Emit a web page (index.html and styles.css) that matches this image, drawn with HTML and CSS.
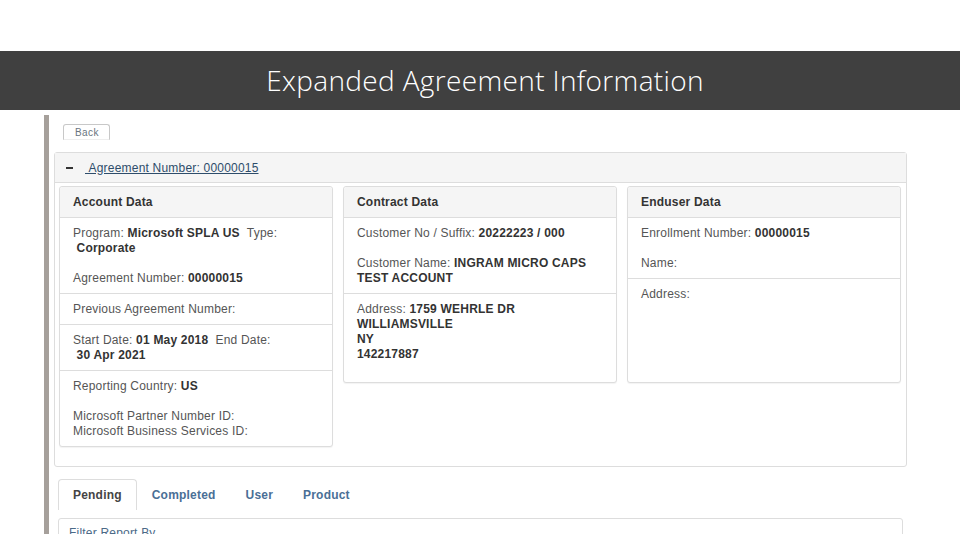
FILE: index.html
```html
<!DOCTYPE html>
<html lang="en">
<head>
  <meta charset="UTF-8">
  <meta name="viewport" content="width=device-width, initial-scale=1.0">
  <title>Expanded Agreement Information</title>
  <link rel="stylesheet" href="styles.css">
</head>
<body>
  <!-- Slide Title -->
  <header class="title-bar">
    <h1>Expanded Agreement Information</h1>
  </header>

  <!-- Screen Capture -->
  <main class="capture">
    <button class="back-btn">Back</button>

    <section class="agreement">
      <div class="agreement-head">
        <span class="collapse-icon"></span>
        <a href="#" class="agreement-link">&nbsp;Agreement Number: 00000015</a>
      </div>

      <div class="agreement-body">
        <!-- Account Data -->
        <div class="card">
          <div class="card-head">Account Data</div>
          <div class="card-row">
            <p>Program: <b>Microsoft SPLA US</b> &nbsp;Type:<br>&nbsp;<b>Corporate</b></p>
            <p>Agreement Number: <b>00000015</b></p>
          </div>
          <div class="card-row">
            <p>Previous Agreement Number:</p>
          </div>
          <div class="card-row">
            <p>Start Date: <b>01 May 2018</b> &nbsp;End Date:<br>&nbsp;<b>30 Apr 2021</b></p>
          </div>
          <div class="card-row">
            <p>Reporting Country: <b>US</b></p>
            <p>Microsoft Partner Number ID:<br>Microsoft Business Services ID:</p>
          </div>
        </div>

        <!-- Contract Data -->
        <div class="card">
          <div class="card-head">Contract Data</div>
          <div class="card-row">
            <p>Customer No / Suffix: <b>20222223 / 000</b></p>
            <p>Customer Name: <b>INGRAM MICRO CAPS</b><br><b>TEST ACCOUNT</b></p>
          </div>
          <div class="card-row tall">
            <p>Address: <b>1759 WEHRLE DR<br>WILLIAMSVILLE<br>NY<br>142217887</b></p>
          </div>
        </div>

        <!-- Enduser Data -->
        <div class="card">
          <div class="card-head">Enduser Data</div>
          <div class="card-row">
            <p>Enrollment Number: <b>00000015</b></p>
            <p>Name:</p>
          </div>
          <div class="card-row address-empty">
            <p>Address:</p>
          </div>
        </div>
      </div>
    </section>

    <!-- Report Tabs -->
    <nav class="tabs">
      <a href="#" class="tab active">Pending</a>
      <a href="#" class="tab">Completed</a>
      <a href="#" class="tab">User</a>
      <a href="#" class="tab">Product</a>
    </nav>

    <div class="filter-box">
      <p>Filter Report By</p>
    </div>
  </main>
</body>
</html>
```

FILE: styles.css
```css
/* General Styles */
body {
  margin: 0;
  padding: 51px 0 0;
  background: #fff;
  font-family: 'Liberation Sans', Arial, sans-serif;
  color: #555;
}

p {
  margin: 0;
}

/* Title Bar */
.title-bar {
  height: 59px;
  background: #404040;
  display: flex;
  align-items: center;
  justify-content: center;
}

.title-bar h1 {
  margin: 0 0 2px 10px;
  font-family: 'Open Sans', sans-serif;
  font-weight: 300;
  font-size: 28px;
  color: #fff;
  letter-spacing: 0.35px;
}

/* Capture Area */
.capture {
  margin: 5px 0 0 44px;
  height: 419px;
  padding-left: 5px;
  border-left: 5px solid #a6a09b;
  overflow: hidden;
  font-size: 12px;
  letter-spacing: 0.2px;
}

.back-btn {
  display: block;
  margin: 9px 0 0 9px;
  height: 16px;
  padding: 0 10px 0 11px;
  background: #fff;
  border: 1px solid #c8c8c8;
  border-bottom-color: #eee;
  border-radius: 3px 3px 0 0;
  font-family: 'Liberation Sans', Arial, sans-serif;
  font-size: 10px;
  letter-spacing: 0.4px;
  color: #6a7580;
}

/* Agreement Panel */
.agreement {
  margin-top: 12px;
  width: 851px;
  border: 1px solid #ddd;
  border-radius: 3px;
}

.agreement-head {
  height: 29px;
  background: #f5f5f5;
  border-bottom: 1px solid #ddd;
  display: flex;
  align-items: center;
  padding-left: 11px;
  gap: 13px;
}

.collapse-icon {
  width: 7px;
  height: 2px;
  background: #333;
}

.agreement-link {
  color: #2e4d6b;
  text-decoration: underline;
  margin-left: -1px;
}

.agreement-body {
  display: grid;
  grid-template-columns: 274px 274px 274px;
  gap: 10px;
  align-items: start;
  padding: 3px 0 19px 4px;
}

/* Data Cards */
.card {
  border: 1px solid #ddd;
  border-radius: 3px;
  box-shadow: 0 1px 1px rgba(0, 0, 0, 0.05);
  background: #fff;
}

.card-head {
  height: 30px;
  line-height: 30px;
  padding: 0 13px;
  background: #f5f5f5;
  border-bottom: 1px solid #ddd;
  border-radius: 3px 3px 0 0;
  font-weight: bold;
  color: #333;
}

.card-row {
  padding: 8px 13px 7px;
  line-height: 15px;
  border-top: 1px solid #ddd;
}

.card-head + .card-row {
  border-top: none;
}

.card-row p + p {
  margin-top: 15px;
}

.card-row b {
  color: #333;
}

.card-row.tall {
  padding-bottom: 20px;
}

.address-empty {
  min-height: 88px;
}

/* Tabs */
.tabs {
  display: flex;
  margin: 12px 0 0 4px;
}

.tab {
  height: 30px;
  line-height: 30px;
  padding: 0 14px;
  border: 1px solid transparent;
  border-bottom: none;
  border-radius: 4px 4px 0 0;
  font-weight: bold;
  color: #4a6f96;
  text-decoration: none;
}

.tab.active {
  border-color: #ddd;
  color: #444;
}

.filter-box {
  margin: 8px 0 0 4px;
  width: 823px;
  height: 60px;
  padding: 7px 10px;
  border: 1px solid #ddd;
  border-radius: 3px;
  color: #4b6a88;
}
```
